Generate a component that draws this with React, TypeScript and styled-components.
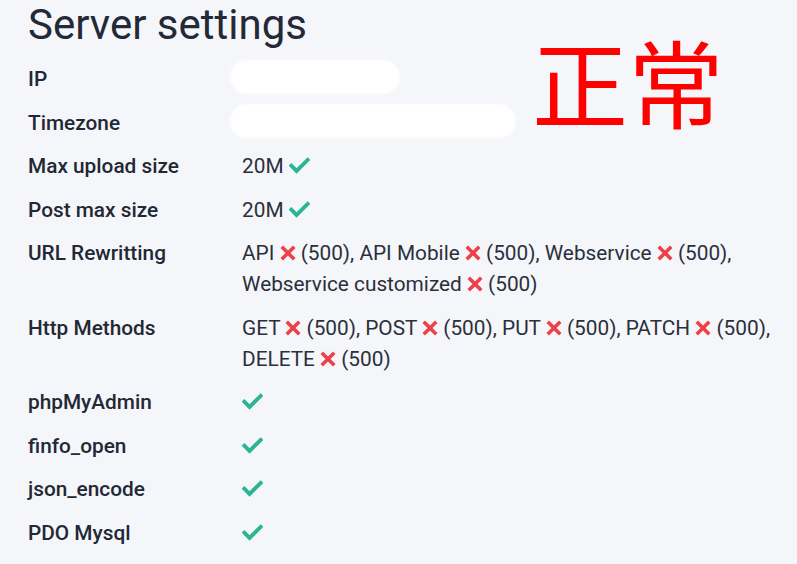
import React from 'react';
import styled, { createGlobalStyle } from 'styled-components';

const GlobalStyle = createGlobalStyle`
  html, body {
    margin: 0;
    padding: 0;
    background: #f5f6fa;
  }
  body {
    font-family: Roboto, "Noto Sans", sans-serif;
    color: #242a35;
  }
`;

type Item = { name: string; ok: boolean; suffix?: string };

type Row = {
  label: string;
  hidden?: number;
  items?: Item[];
};

const fails = (names: string[]): Item[] =>
  names.map((name, i) => ({
    name,
    ok: false,
    suffix: i === names.length - 1 ? '(500)' : '(500),',
  }));

const rows: Row[] = [
  { label: 'IP', hidden: 170 },
  { label: 'Timezone', hidden: 286 },
  { label: 'Max upload size', items: [{ name: '20M', ok: true }] },
  { label: 'Post max size', items: [{ name: '20M', ok: true }] },
  { label: 'URL Rewritting', items: fails(['API', 'API Mobile', 'Webservice', 'Webservice customized']) },
  { label: 'Http Methods', items: fails(['GET', 'POST', 'PUT', 'PATCH', 'DELETE']) },
  { label: 'phpMyAdmin', items: [{ name: '', ok: true }] },
  { label: 'finfo_open', items: [{ name: '', ok: true }] },
  { label: 'json_encode', items: [{ name: '', ok: true }] },
  { label: 'PDO Mysql', items: [{ name: '', ok: true }] },
];

const Check = () => (
  <CheckSvg viewBox="0 0 20 16">
    <path d="M2.2 8.2l5 5L17.8 2.6" fill="none" stroke="#2bb594" strokeWidth="3.6" strokeLinecap="square" />
  </CheckSvg>
);

const Cross = () => (
  <CrossSvg viewBox="0 0 16 16">
    <path d="M3 3l10 10M13 3L3 13" fill="none" stroke="#ed4149" strokeWidth="3.6" strokeLinecap="square" />
  </CrossSvg>
);

export default function App() {
  return (
    <Page>
      <GlobalStyle />
      <Title>Server settings</Title>
      <Table>
        {rows.map((row) => (
          <React.Fragment key={row.label}>
            <Label>{row.label}</Label>
            <Value>
              {row.hidden ? <Redacted $width={row.hidden} /> : null}
              {row.items?.map((it, i) => (
                <React.Fragment key={i}>
                  {i > 0 ? ' ' : null}
                  {it.name ? `${it.name} ` : null}
                  <Status>
                    {it.ok ? <Check /> : <Cross />}
                    {it.suffix ? ` ${it.suffix}` : null}
                  </Status>
                </React.Fragment>
              ))}
            </Value>
          </React.Fragment>
        ))}
      </Table>
      <Stamp>正常</Stamp>
    </Page>
  );
}

const Page = styled.div`
  position: relative;
  width: 797px;
  height: 564px;
  padding: 0 16px 0 28px;
  box-sizing: border-box;
  overflow: hidden;
`;

const Title = styled.h1`
  margin: 0;
  font-size: 42px;
  line-height: 50px;
  font-weight: 400;
  color: #232936;
`;

const Table = styled.div`
  display: grid;
  grid-template-columns: 214px 1fr;
  row-gap: 12.5px;
  margin-top: 14px;
  font-size: 20.8px;
  line-height: 31px;
`;

const Label = styled.div`
  font-weight: 500;
  color: #222834;
`;

const Value = styled.div`
  font-weight: 400;
  color: #2a303b;
  position: relative;
  min-height: 31px;
`;

const Status = styled.span`
  white-space: nowrap;
`;

const Redacted = styled.span<{ $width: number }>`
  position: absolute;
  left: -12px;
  top: -4px;
  width: ${(p) => p.$width}px;
  height: 34px;
  border-radius: 17px;
  background: #ffffff;
  filter: blur(1px);
`;

const CheckSvg = styled.svg`
  width: 21px;
  height: 17px;
  vertical-align: -1px;
`;

const CrossSvg = styled.svg`
  width: 16px;
  height: 16px;
  vertical-align: -1px;
`;

const Stamp = styled.div`
  position: absolute;
  left: 532px;
  top: 20px;
  font-family: "Noto Sans CJK SC", sans-serif;
  font-size: 96px;
  line-height: 120px;
  color: #ff0000;
  font-weight: 400;
`;
